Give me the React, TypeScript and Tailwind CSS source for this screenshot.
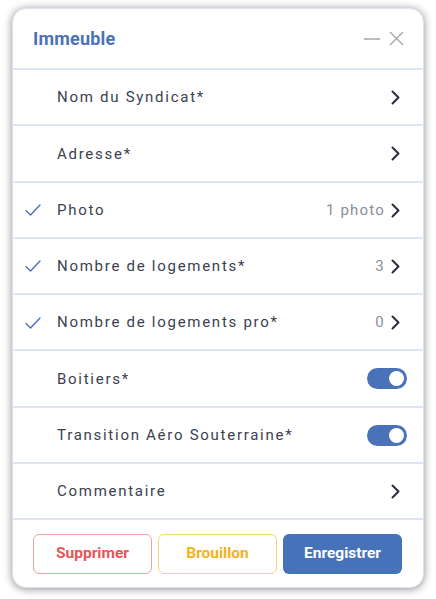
import React from "react";

type Row = {
  label: string;
  checked?: boolean;
  value?: string;
  kind: "link" | "toggle";
};

const rows: Row[] = [
  { label: "Nom du Syndicat*", kind: "link" },
  { label: "Adresse*", kind: "link" },
  { label: "Photo", checked: true, value: "1 photo", kind: "link" },
  { label: "Nombre de logements*", checked: true, value: "3", kind: "link" },
  { label: "Nombre de logements pro*", checked: true, value: "0", kind: "link" },
  { label: "Boitiers*", kind: "toggle" },
  { label: "Transition Aéro Souterraine*", kind: "toggle" },
  { label: "Commentaire", kind: "link" },
];

function Check() {
  return (
    <svg width="16" height="12" viewBox="0 0 16 12" fill="none" className="text-[#4a72b8]">
      <path d="M1 6.5 L5.5 11 L15 1" stroke="currentColor" strokeWidth="1.4" strokeLinecap="round" strokeLinejoin="round" />
    </svg>
  );
}

function Chevron() {
  return (
    <svg width="9" height="15" viewBox="0 0 9 15" fill="none" className="text-[#2a2f3c]">
      <path d="M1.5 1.5 L7.5 7.5 L1.5 13.5" stroke="currentColor" strokeWidth="2" strokeLinecap="round" strokeLinejoin="round" />
    </svg>
  );
}

function Toggle() {
  return (
    <div className="w-10 h-[21px] rounded-full bg-[#4a72b8] flex items-center justify-end px-[3px]">
      <span className="w-[15px] h-[15px] rounded-full bg-white" />
    </div>
  );
}

export default function App() {
  return (
    <div className="w-[436px] h-[599px] bg-white pt-2 pl-3 font-['Roboto',sans-serif]">
      <div className="w-[412px] h-[580px] bg-white rounded-[14px] border border-[#dbe3ee] shadow-[0_1px_8px_rgba(0,0,0,0.45)] overflow-hidden flex flex-col">
        {/* Header */}
        <div className="h-[61px] flex items-center justify-between pl-5 pr-[19px] border-b-2 border-[#dde7f3]">
          <span className="text-[18px] font-bold text-[#4a72b8] tracking-[0.01em]">Immeuble</span>
          <div className="flex items-center gap-2 text-[#a2a6ad]">
            <svg width="18" height="18" viewBox="0 0 18 18" fill="none">
              <path d="M1 9 H17" stroke="currentColor" strokeWidth="1.6" />
            </svg>
            <svg width="15" height="15" viewBox="0 0 15 15" fill="none">
              <path d="M1 1 L14 14 M14 1 L1 14" stroke="currentColor" strokeWidth="1.4" />
            </svg>
          </div>
        </div>

        {/* Rows */}
        {rows.map((row) => (
          <div
            key={row.label}
            className="h-[56.25px] flex items-center border-b-2 border-[#dde7f3] pl-[12px] pr-[23px] pt-px"
          >
            <div className="w-8 flex items-center">{row.checked && <Check />}</div>
            <span className="flex-1 text-[15px] text-[#3b4150] tracking-[0.115em]">{row.label}</span>
            {row.kind === "link" ? (
              <div className="flex items-center gap-1.5">
                {row.value && (
                  <span className="text-[15px] text-[#8b8f97] tracking-[0.08em]">{row.value}</span>
                )}
                <Chevron />
              </div>
            ) : (
              <div className="-mr-[7px]">
                <Toggle />
              </div>
            )}
          </div>
        ))}

        {/* Footer */}
        <div className="flex-1 grid grid-cols-3 gap-[6px] pl-5 pr-[21px] items-center">
          <button className="h-10 rounded-md border border-[#f0a0a0] text-[#e65656] text-[15.5px] font-bold">
            Supprimer
          </button>
          <button className="h-10 rounded-md border border-[#f7d578] text-[#f2b419] text-[15.5px] font-bold">
            Brouillon
          </button>
          <button className="h-10 rounded-md bg-[#4672b9] text-white text-[15.5px] font-bold">
            Enregistrer
          </button>
        </div>
      </div>
    </div>
  );
}
